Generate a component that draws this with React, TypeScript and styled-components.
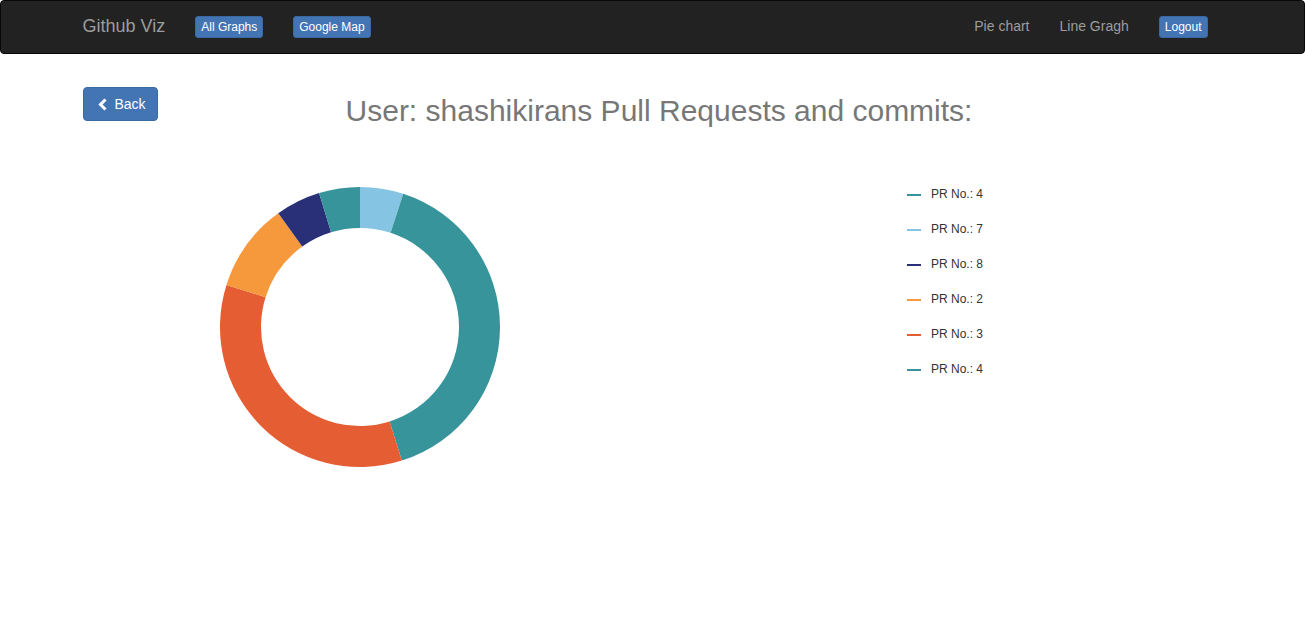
import React from "react";
import styled, { createGlobalStyle } from "styled-components";

const Global = createGlobalStyle`
  html, body { margin: 0; padding: 0; background: #fff; }
  body {
    font-family: "Liberation Sans", Arial, Helvetica, sans-serif;
    font-size: 14px;
    line-height: 1.42857;
    color: #333;
  }
  * { box-sizing: border-box; }
`;

const BLUE = "#4375b4";
const BLUE_BORDER = "#3a68a3";

const Navbar = styled.nav`
  height: 54px;
  background: #222;
  border: 1px solid #080808;
  border-radius: 4px;
`;

const NavInner = styled.div`
  width: 1170px;
  height: 100%;
  margin: 0 auto;
  padding: 0 15px;
  display: flex;
  align-items: center;
  justify-content: space-between;
`;

const NavGroup = styled.div`
  display: flex;
  align-items: center;
`;

const Brand = styled.span`
  font-size: 18px;
  line-height: 20px;
  color: #9d9d9d;
  padding-right: 15px;
  margin-top: -2px;
`;

const NavItem = styled.span`
  display: flex;
  align-items: center;
  padding: 0 15px;
`;

const NavLink = styled.span`
  color: #9d9d9d;
  font-size: 14px;
  line-height: 20px;
  margin-top: -2px;
`;

const XsButton = styled.span`
  display: inline-block;
  background: ${BLUE};
  border: 1px solid ${BLUE_BORDER};
  border-radius: 3px;
  color: #fff;
  font-size: 12px;
  line-height: 18px;
  padding: 1px 5px;
  margin-top: -1px;
`;

const Container = styled.div`
  width: 1170px;
  margin: 0 auto;
  padding: 0 15px;
`;

const HeaderRow = styled.div`
  display: grid;
  grid-template-columns: 75px 1fr;
  align-items: start;
  margin-top: 33px;
`;

const BackButton = styled.button`
  display: inline-flex;
  align-items: center;
  gap: 8px;
  height: 34px;
  width: 75px;
  padding: 6px 10px 6px 14px;
  background: ${BLUE};
  border: 1px solid ${BLUE_BORDER};
  border-radius: 4px;
  color: #fff;
  font-family: inherit;
  font-size: 14px;
  line-height: 20px;
  cursor: pointer;
`;

const Title = styled.h2`
  margin: 7px 0 0;
  padding-right: 62px;
  text-align: center;
  font-size: 30px;
  font-weight: 400;
  line-height: 33px;
  color: #777;
`;

const ChartRow = styled.div`
  display: flex;
  align-items: flex-start;
  margin-top: 50px;
`;

const Donut = styled.svg`
  display: block;
  margin-left: 137.5px;
  margin-top: 10px;
`;

const Legend = styled.ul`
  list-style: none;
  margin: 0 0 0 407px;
  padding: 0;
`;

const LegendItem = styled.li`
  display: flex;
  align-items: center;
  height: 35px;
  font-size: 12px;
  color: #333;
`;

const Swatch = styled.span<{ $color: string }>`
  display: inline-block;
  width: 14px;
  height: 2px;
  background: ${(p) => p.$color};
  margin-right: 10px;
`;

const TEAL = "#36949a";
const LIGHT = "#85c5e3";
const NAVY = "#2a3077";
const ORANGE = "#f6993d";
const RED = "#e55e33";

const segments = [
  { from: 0, to: 18, color: LIGHT },
  { from: 18, to: 162.6, color: TEAL },
  { from: 162.6, to: 287.5, color: RED },
  { from: 287.5, to: 324.3, color: ORANGE },
  { from: 324.3, to: 343, color: NAVY },
  { from: 343, to: 360, color: TEAL },
];

const legend = [
  { label: "PR No.: 4", color: TEAL },
  { label: "PR No.: 7", color: LIGHT },
  { label: "PR No.: 8", color: NAVY },
  { label: "PR No.: 2", color: ORANGE },
  { label: "PR No.: 3", color: RED },
  { label: "PR No.: 4", color: TEAL },
];

function arcPath(cx: number, cy: number, r0: number, r1: number, a0: number, a1: number) {
  const rad = (d: number) => ((d - 90) * Math.PI) / 180;
  const p = (r: number, a: number) => `${cx + r * Math.cos(rad(a))},${cy + r * Math.sin(rad(a))}`;
  const large = a1 - a0 > 180 ? 1 : 0;
  return `M${p(r1, a0)} A${r1},${r1} 0 ${large} 1 ${p(r1, a1)} L${p(r0, a1)} A${r0},${r0} 0 ${large} 0 ${p(r0, a0)} Z`;
}

const Chevron = () => (
  <svg width="9" height="13" viewBox="0 0 9 13">
    <polyline points="7.5,1.5 2.5,6.5 7.5,11.5" fill="none" stroke="#fff" strokeWidth="3" />
  </svg>
);

export default function App() {
  return (
    <>
      <Global />
      <Navbar>
        <NavInner>
          <NavGroup>
            <Brand>Github Viz</Brand>
            <NavItem><XsButton>All Graphs</XsButton></NavItem>
            <NavItem><XsButton>Google Map</XsButton></NavItem>
          </NavGroup>
          <NavGroup>
            <NavItem><NavLink>Pie chart</NavLink></NavItem>
            <NavItem><NavLink>Line Gragh</NavLink></NavItem>
            <NavItem><XsButton>Logout</XsButton></NavItem>
          </NavGroup>
        </NavInner>
      </Navbar>
      <Container>
        <HeaderRow>
          <BackButton><Chevron />Back</BackButton>
          <Title>User: shashikirans Pull Requests and commits:</Title>
        </HeaderRow>
        <ChartRow>
          <Donut width="280" height="280" viewBox="0 0 280 280">
            {segments.map((s, i) => (
              <path key={i} d={arcPath(140, 140, 99, 140, s.from, s.to)} fill={s.color} />
            ))}
          </Donut>
          <Legend>
            {legend.map((l, i) => (
              <LegendItem key={i}>
                <Swatch $color={l.color} />
                {l.label}
              </LegendItem>
            ))}
          </Legend>
        </ChartRow>
      </Container>
    </>
  );
}
